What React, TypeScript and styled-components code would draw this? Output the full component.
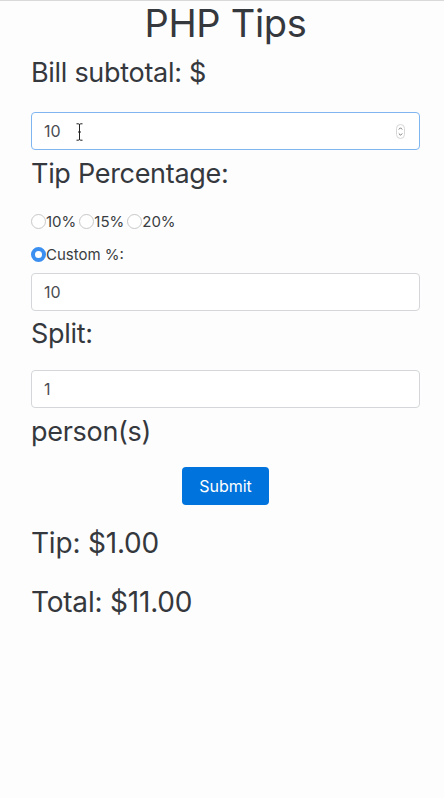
import React from "react";
import styled, { createGlobalStyle } from "styled-components";

const Global = createGlobalStyle`
  html, body { margin: 0; padding: 0; background: #fdfdfd; }
  body { font-family: Inter, "Noto Sans", sans-serif; color: #35383d; }
  * { box-sizing: border-box; }
`;

const Page = styled.div`
  border-top: 1px solid #d9d9d9;
  min-height: 798px;
  padding: 0 24px 0 31px;
  display: flex;
  flex-direction: column;
`;

const Title = styled.h1`
  margin: 0;
  font-size: 38px;
  font-weight: 400;
  line-height: 44px;
  text-align: center;
  letter-spacing: -0.3px;
`;

const Heading = styled.div<{ $top: number; $bottom: number }>`
  font-size: 27px;
  font-weight: 400;
  line-height: 32px;
  margin-top: ${(p) => p.$top}px;
  margin-bottom: ${(p) => p.$bottom}px;
  letter-spacing: -0.3px;
`;

const Field = styled.div<{ $focus?: boolean; $top?: number }>`
  height: 38px;
  margin-top: ${(p) => p.$top ?? 0}px;
  border: 1px solid ${(p) => (p.$focus ? "#7fb6f0" : "#d4d6d9")};
  border-radius: 4px;
  background: #fff;
  display: flex;
  align-items: center;
  padding: 0 12px;
  font-size: 16px;
  color: #4a4d52;
  position: relative;
`;

const Value = styled.span`
  flex: 1;
`;

const Spinner = styled.span`
  width: 9px;
  height: 15px;
  border: 1px solid #d6d6d6;
  border-radius: 5px;
  display: flex;
  align-items: center;
  justify-content: center;
  margin-right: 2px;
`;

const Cursor = styled.svg`
  position: absolute;
  left: 44px;
  top: 10px;
`;

const RadioRow = styled.div<{ $top: number }>`
  display: flex;
  align-items: center;
  margin-top: ${(p) => p.$top}px;
  font-size: 15px;
  color: #3a3d42;
  height: 18px;
`;

const RadioItem = styled.label`
  display: flex;
  align-items: center;
  margin-right: 3px;
`;

const Circle = styled.span<{ $on?: boolean }>`
  width: 15px;
  height: 15px;
  border-radius: 50%;
  border: ${(p) => (p.$on ? "4px solid #3b8ff0" : "1px solid #c8c8c8")};
  background: #fff;
  display: inline-block;
  flex-shrink: 0;
`;

const ButtonRow = styled.div`
  display: flex;
  justify-content: center;
  margin-top: 19px;
`;

const Button = styled.button`
  width: 87px;
  height: 38px;
  background: #0073dc;
  color: #fff;
  border: none;
  border-radius: 4px;
  font-family: Inter, sans-serif;
  font-size: 16px;
`;

const Result = styled.div<{ $top: number }>`
  font-size: 28px;
  line-height: 34px;
  margin-top: ${(p) => p.$top}px;
  letter-spacing: -0.2px;
`;

export default function App() {
  return (
    <>
      <Global />
      <Page>
        <Title>PHP Tips</Title>
        <Heading $top={12} $bottom={23}>Bill subtotal: $</Heading>
        <Field $focus>
          <Value>10</Value>
          <Cursor width="7" height="18" viewBox="0 0 7 18">
            <path d="M0.5 0.8 H2.5 Q3.5 0.8 3.5 2 V16 Q3.5 17.2 2.5 17.2 H0.5 M6.5 0.8 H4.5 Q3.5 0.8 3.5 2 M3.5 16 Q3.5 17.2 4.5 17.2 H6.5 M2 9 H5" stroke="#222" strokeWidth="1" fill="none" />
          </Cursor>
          <Spinner>
            <svg width="5" height="11" viewBox="0 0 5 11">
              <path d="M0.8 3.5 L2.5 1.8 L4.2 3.5 M0.8 7.5 L2.5 9.2 L4.2 7.5" stroke="#666" strokeWidth="0.9" fill="none" />
            </svg>
          </Spinner>
        </Field>
        <Heading $top={8} $bottom={0}>Tip Percentage:</Heading>
        <RadioRow $top={22}>
          <RadioItem><Circle />10%</RadioItem>
          <RadioItem><Circle />15%</RadioItem>
          <RadioItem><Circle />20%</RadioItem>
        </RadioRow>
        <RadioRow $top={15}>
          <RadioItem><Circle $on />Custom %:</RadioItem>
        </RadioRow>
        <Field $top={10}>
          <Value>10</Value>
        </Field>
        <Heading $top={7} $bottom={20}>Split:</Heading>
        <Field>
          <Value>1</Value>
        </Field>
        <Heading $top={8} $bottom={0}>person(s)</Heading>
        <ButtonRow>
          <Button>Submit</Button>
        </ButtonRow>
        <Result $top={21}>Tip: $1.00</Result>
        <Result $top={25}>Total: $11.00</Result>
      </Page>
    </>
  );
}
